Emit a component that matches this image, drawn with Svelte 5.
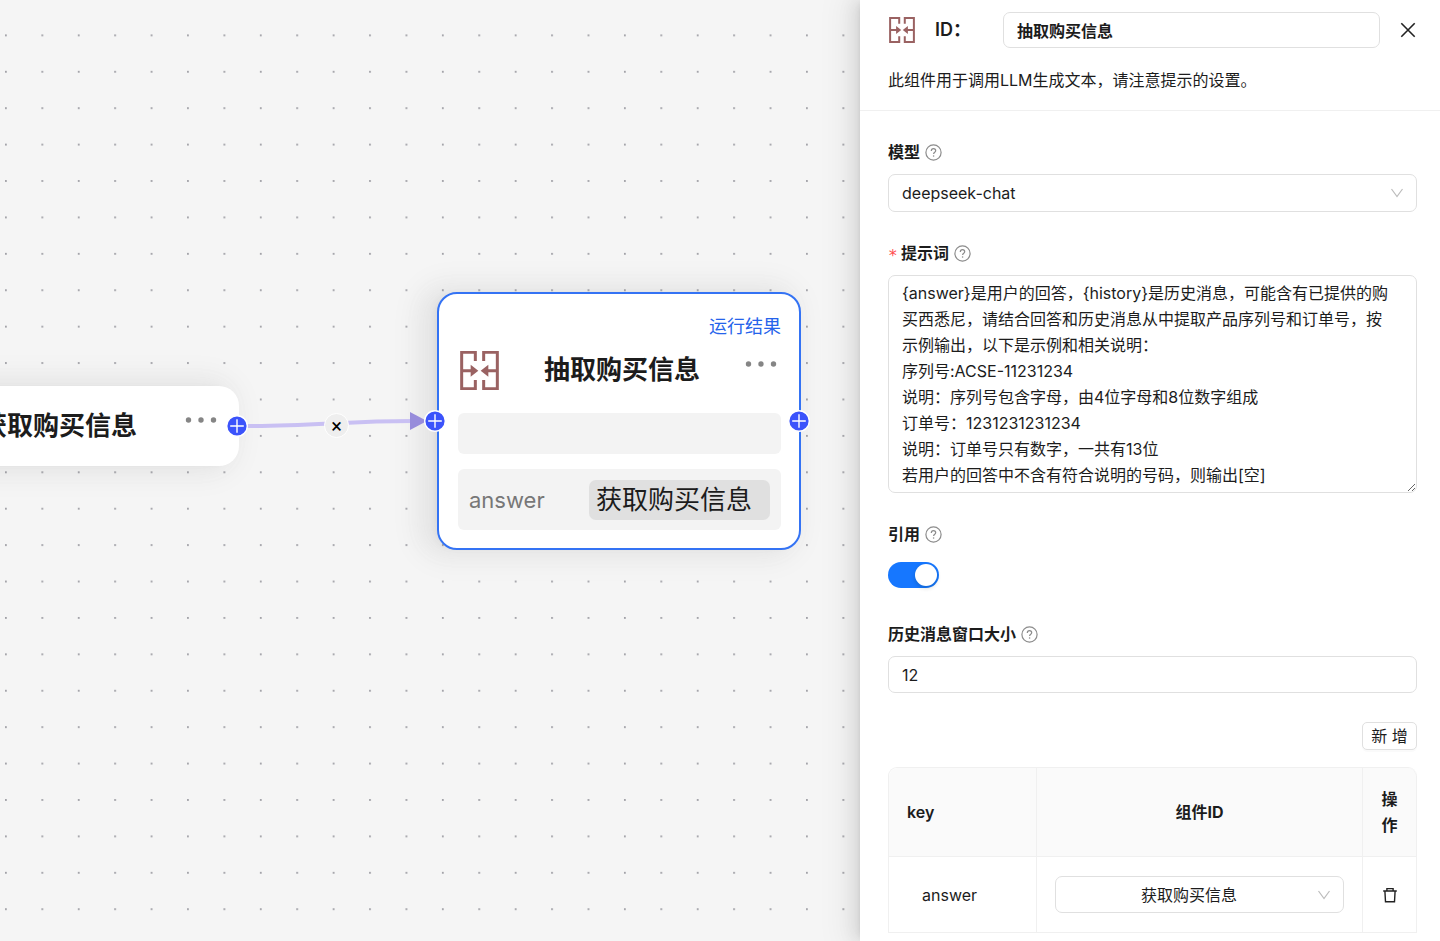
<script>
  let nodeId = $state('抽取购买信息');
  let model = $state('deepseek-chat');
  let cite = $state(true);
  let windowSize = $state('12');
  let prompt = $state(
    [
      '{answer}是用户的回答，{history}是历史消息，可能含有已提供的购买西悉尼，请结合回答和历史消息从中提取产品序列号和订单号，按示例输出，以下是示例和相关说明：',
      '序列号:ACSE-11231234',
      '说明：序列号包含字母，由4位字母和8位数字组成',
      '订单号：1231231231234',
      '说明：订单号只有数字，一共有13位',
      '若用户的回答中不含有符合说明的号码，则输出[空]'
    ].join('\n')
  );
  let rows = $state([{ key: 'answer', component: '获取购买信息' }]);
</script>

{#snippet keywordIcon()}
  <svg class="keyword-icon" viewBox="0 0 117 117" aria-hidden="true">
    <path d="M46 30V4H5V113H46V87M5 59H36M71 30V4H112V113H71V87M112 59H81" fill="none" stroke="currentColor" stroke-width="9" />
    <path d="M32 41L55 59 32 77zM85 41L62 59 85 77z" fill="currentColor" />
  </svg>
{/snippet}

{#snippet help()}
  <svg class="help" viewBox="0 0 17 17" aria-hidden="true">
    <circle cx="8.5" cy="8.5" r="7.6" />
    <path d="M6.3 6.9C6.3 5.4 7.2 4.6 8.5 4.6S10.7 5.5 10.7 6.7C10.7 8.2 8.6 8.2 8.6 10" />
    <circle class="point" cx="8.6" cy="12" r="0.8" />
  </svg>
{/snippet}

{#snippet chevron()}
  <svg class="chevron" viewBox="0 0 14 14" aria-hidden="true">
    <path d="M1.5 3L7 10.6 12.5 3" />
  </svg>
{/snippet}

{#snippet dots()}
  <button class="more" aria-label="更多">
    <svg viewBox="0 0 32 8" aria-hidden="true">
      <circle cx="3.5" cy="4" r="2.7" />
      <circle cx="16" cy="4" r="2.7" />
      <circle cx="28.5" cy="4" r="2.7" />
    </svg>
  </button>
{/snippet}

{#snippet handle(side)}
  <svg class="handle {side}" viewBox="0 0 22 22" aria-hidden="true">
    <circle cx="11" cy="11" r="10.3" />
    <path d="M11 4.2V17.8M4.2 11H17.8" />
  </svg>
{/snippet}

<div class="app">
  <main class="canvas">
    <svg class="layer" aria-hidden="true">
      <defs>
        <pattern id="grid-dots" width="20" height="20" patternUnits="userSpaceOnUse" patternTransform="translate(5 -2) scale(1.8205)">
          <circle cx="0.5" cy="0.5" r="0.5" fill="#84848c" />
        </pattern>
      </defs>
      <rect width="100%" height="100%" fill="url(#grid-dots)" />
    </svg>

    <article class="node source">
      <h2>获取购买信息</h2>
      {@render dots()}
      {@render handle('right')}
    </article>

    <article class="node target">
      <a class="result" href="#result">运行结果</a>
      <div class="title-row">
        {@render keywordIcon()}
        <h2>抽取购买信息</h2>
        {@render dots()}
      </div>
      <div class="slot empty"></div>
      <div class="slot">
        <span class="param">answer</span>
        <span class="tag">获取购买信息</span>
      </div>
      {@render handle('left')}
      {@render handle('right')}
    </article>

    <svg class="layer edges" aria-hidden="true">
      <path d="M247 426C310 426 350 421 412 421" fill="none" stroke="#c9c0f3" stroke-width="4" />
      <path d="M410 412L427 421 410 430z" fill="#978cdb" />
    </svg>
    <button class="cut" aria-label="删除连线">×</button>
  </main>

  <aside class="drawer">
    <header>
      <div class="id-row">
        {@render keywordIcon()}
        <label for="node-id">ID：</label>
        <input id="node-id" class="control" bind:value={nodeId} />
        <button class="close" aria-label="关闭">
          <svg viewBox="0 0 16 16" aria-hidden="true"><path d="M1.3 1.3L14.7 14.7M14.7 1.3L1.3 14.7" /></svg>
        </button>
      </div>
      <p>此组件用于调用LLM生成文本，请注意提示的设置。</p>
    </header>

    <form onsubmit={(e) => e.preventDefault()}>
      <div class="field">
        <label for="model">模型{@render help()}</label>
        <div class="picker">
          <select id="model" class="control" bind:value={model}>
            <option>deepseek-chat</option>
          </select>
          {@render chevron()}
        </div>
      </div>

      <div class="field">
        <label for="prompt"><span class="required">*</span>提示词{@render help()}</label>
        <textarea id="prompt" class="control" rows="8" bind:value={prompt}></textarea>
      </div>

      <div class="field">
        <label for="cite">引用{@render help()}</label>
        <div class="switch-row">
          <input id="cite" class="switch" type="checkbox" role="switch" bind:checked={cite} />
        </div>
      </div>

      <div class="field">
        <label for="window-size">历史消息窗口大小{@render help()}</label>
        <input id="window-size" class="control" inputmode="numeric" bind:value={windowSize} />
      </div>

      <button class="add" type="button" onclick={() => rows.push({ key: '', component: '获取购买信息' })}>新 增</button>

      <table>
        <thead>
          <tr>
            <th class="key">key</th>
            <th>组件ID</th>
            <th class="action">操作</th>
          </tr>
        </thead>
        <tbody>
          {#each rows as row, i}
            <tr>
              <td class="name">{row.key}</td>
              <td>
                <div class="picker centered">
                  <select class="control" aria-label="组件ID" bind:value={row.component}>
                    <option>获取购买信息</option>
                  </select>
                  {@render chevron()}
                </div>
              </td>
              <td class="action">
                <button class="remove" type="button" aria-label="删除" onclick={() => rows.splice(i, 1)}>
                  <svg viewBox="0 0 16 16" aria-hidden="true">
                    <path d="M1.2 4H14.8M4.9 4V1.6H11.1V4M2.9 4L3.5 14.7H12.5L13.1 4" />
                  </svg>
                </button>
              </td>
            </tr>
          {/each}
        </tbody>
      </table>
    </form>
  </aside>
</div>

<style>
  :global(body) {
    margin: 0;
    color: #1c1c1c;
    font: 16px/26px Inter, 'Noto Sans CJK SC', sans-serif;
  }
  .app,
  .app * {
    box-sizing: border-box;
  }
  .app {
    display: flex;
    height: 100vh;
    overflow: hidden;
  }
  button,
  input,
  select,
  textarea {
    margin: 0;
    color: inherit;
    font: inherit;
  }
  button {
    display: grid;
    place-items: center;
    padding: 0;
    border: 0;
    background: none;
    cursor: pointer;
  }
  h2,
  p {
    margin: 0;
  }

  .canvas {
    position: relative;
    flex: 1;
    min-width: 0;
    overflow: hidden;
    background: #f5f5f5;
  }
  .layer {
    position: absolute;
    inset: 0;
    width: 100%;
    height: 100%;
    pointer-events: none;
  }
  .node {
    position: absolute;
    width: 364px;
    background: #fff;
    border-radius: 20px;
    box-shadow:
      -11px 0 22px rgba(179, 177, 177, 0.08),
      -5px 0 11px -7px rgba(0, 0, 0, 0.12),
      -11px 0 29px 11px rgba(0, 0, 0, 0.05);
  }
  .node h2 {
    flex: 1;
    font-size: 26px;
    font-weight: 700;
    line-height: 40px;
    text-align: center;
    white-space: nowrap;
  }
  .source {
    top: 386px;
    left: -125px;
    display: flex;
    align-items: center;
    height: 80px;
    padding: 0 22px 0 58px;
  }
  .more {
    margin-bottom: 12px;
  }
  .target {
    top: 292px;
    left: 437px;
    display: flex;
    flex-direction: column;
    padding: 20px 18px 18px 19px;
    border: 2px solid #3473f4;
  }
  .result {
    align-self: flex-end;
    color: #2563eb;
    font-size: 18px;
    line-height: 26px;
    text-decoration: none;
  }
  .title-row {
    display: flex;
    align-items: center;
    height: 60px;
    margin-bottom: 13px;
    padding: 0 4px 0 2px;
  }
  .more svg {
    width: 32px;
    height: 8px;
    fill: #858585;
  }
  .keyword-icon {
    flex: none;
    width: 39px;
    height: 39px;
    color: #9a6262;
  }
  .slot {
    display: flex;
    align-items: center;
    justify-content: space-between;
    height: 61px;
    padding: 0 11px;
    border-radius: 6px;
    background: #f3f3f3;
  }
  .slot.empty {
    height: 41px;
    margin-bottom: 15px;
  }
  .param {
    color: #777;
    font-size: 22px;
  }
  .tag {
    width: 181px;
    padding: 0 7px;
    border-radius: 7px;
    background: #e0e0e0;
    font-size: 26px;
    line-height: 40px;
    white-space: nowrap;
  }
  .handle {
    position: absolute;
    top: 50%;
    width: 22px;
    height: 22px;
    margin-top: -11px;
    z-index: 1;
    fill: #3b53fb;
    stroke: #fff;
    stroke-width: 1.4;
  }
  .handle.right {
    right: -11px;
  }
  .handle.left {
    left: -15px;
  }
  .source .handle.right {
    right: -9px;
  }
  .cut {
    position: absolute;
    top: 413px;
    left: 324px;
    width: 25px;
    height: 25px;
    border: 1px solid #fff;
    border-radius: 50%;
    background: #eee;
    color: #000;
    font-family: Roboto, sans-serif;
    font-size: 20px;
    line-height: 22px;
  }

  .drawer {
    position: relative;
    flex: 0 0 580px;
    overflow: auto;
    background: #fff;
    box-shadow:
      -6px 0 16px rgba(0, 0, 0, 0.08),
      -3px 0 6px -4px rgba(0, 0, 0, 0.12),
      -9px 0 28px 8px rgba(0, 0, 0, 0.05);
  }
  header {
    padding: 12px 23px 17px 28px;
    border-bottom: 1px solid #f0f0f0;
  }
  .id-row {
    display: flex;
    align-items: center;
    margin-bottom: 19px;
  }
  .id-row .keyword-icon {
    width: 26px;
    height: 26px;
    margin: 0 20px 0 1px;
  }
  .id-row label {
    width: 68px;
    font-size: 18px;
    font-weight: 600;
  }
  .id-row input {
    flex: 1;
    min-width: 0;
    height: 36px;
    font-weight: 700;
  }
  .close {
    width: 16px;
    height: 26px;
    margin: 0 1px 0 20px;
  }
  .close svg {
    width: 16px;
    height: 16px;
    stroke: #222;
    stroke-width: 1.6;
  }
  form {
    display: flex;
    flex-direction: column;
    padding: 28px 23px 9px 28px;
  }
  .field {
    display: flex;
    flex-direction: column;
    gap: 9px;
    margin-bottom: 28px;
  }
  .field label {
    display: flex;
    align-items: center;
    font-weight: 700;
  }
  .help {
    width: 17px;
    height: 17px;
    margin-left: 5px;
    fill: none;
    stroke: #8c8c8c;
    stroke-width: 1.2;
  }
  .help .point {
    fill: #8c8c8c;
    stroke: none;
  }
  .required {
    width: 13px;
    padding-top: 6px;
    color: #ff4d4f;
    font-family: 'DejaVu Sans Mono', monospace;
    font-weight: 400;
    line-height: 20px;
  }
  .control {
    width: 100%;
    height: 37px;
    padding: 0 13px;
    border: 1px solid #e0e0e0;
    border-radius: 7px;
    background: #fff;
    outline: none;
  }
  .picker {
    display: grid;
    align-items: center;
  }
  .picker > :global(*) {
    grid-area: 1 / 1;
  }
  .picker select {
    height: 38px;
    appearance: none;
  }
  .picker.centered select {
    height: 37px;
    padding: 0 34px 0 13px;
    text-align: center;
    text-align-last: center;
  }
  .chevron {
    justify-self: end;
    width: 14px;
    height: 14px;
    margin-right: 13px;
    fill: none;
    stroke: #bcbcbc;
    stroke-width: 1.2;
    pointer-events: none;
  }
  textarea.control {
    display: block;
    height: auto;
    padding: 4px 23px 4px 13px;
    line-height: 26px;
    resize: vertical;
    overflow: hidden;
  }
  .switch-row {
    display: flex;
    align-items: center;
    height: 37px;
  }
  .switch {
    display: flex;
    width: 51px;
    height: 26px;
    padding: 2px;
    border-radius: 13px;
    background: #bfbfbf;
    appearance: none;
    cursor: pointer;
  }
  .switch::before {
    content: '';
    width: 22px;
    height: 22px;
    border-radius: 50%;
    background: #fff;
    box-shadow: 0 2px 4px rgba(0, 35, 11, 0.2);
  }
  .switch:checked {
    justify-content: flex-end;
    background: #1677ff;
  }
  .add {
    align-self: flex-end;
    width: 55px;
    height: 28px;
    margin: 1px 0 17px;
    border: 1px solid #e0e0e0;
    border-radius: 5px;
    background: #fff;
    box-shadow: 0 2px 0 rgba(0, 0, 0, 0.02);
  }
  table {
    width: 100%;
    border: 1px solid #f0f0f0;
    border-right: 0;
    border-bottom: 0;
    border-radius: 9px 9px 0 0;
    border-spacing: 0;
    table-layout: fixed;
  }
  th,
  td {
    padding: 18px;
    border-right: 1px solid #f0f0f0;
    border-bottom: 1px solid #f0f0f0;
    text-align: center;
  }
  th {
    background: #fafafa;
    font-weight: 700;
  }
  th:first-child {
    border-top-left-radius: 9px;
  }
  th:last-child {
    border-top-right-radius: 9px;
  }
  .key {
    width: 148px;
    height: 89px;
    text-align: left;
    font-weight: 600;
  }
  .name {
    height: 76px;
    padding-left: 33px;
    text-align: left;
  }
  .action {
    width: 54px;
  }
  .remove {
    width: 18px;
    height: 26px;
  }
  .remove svg {
    width: 16px;
    height: 16px;
    fill: none;
    stroke: #222;
    stroke-width: 1.4;
  }
</style>
